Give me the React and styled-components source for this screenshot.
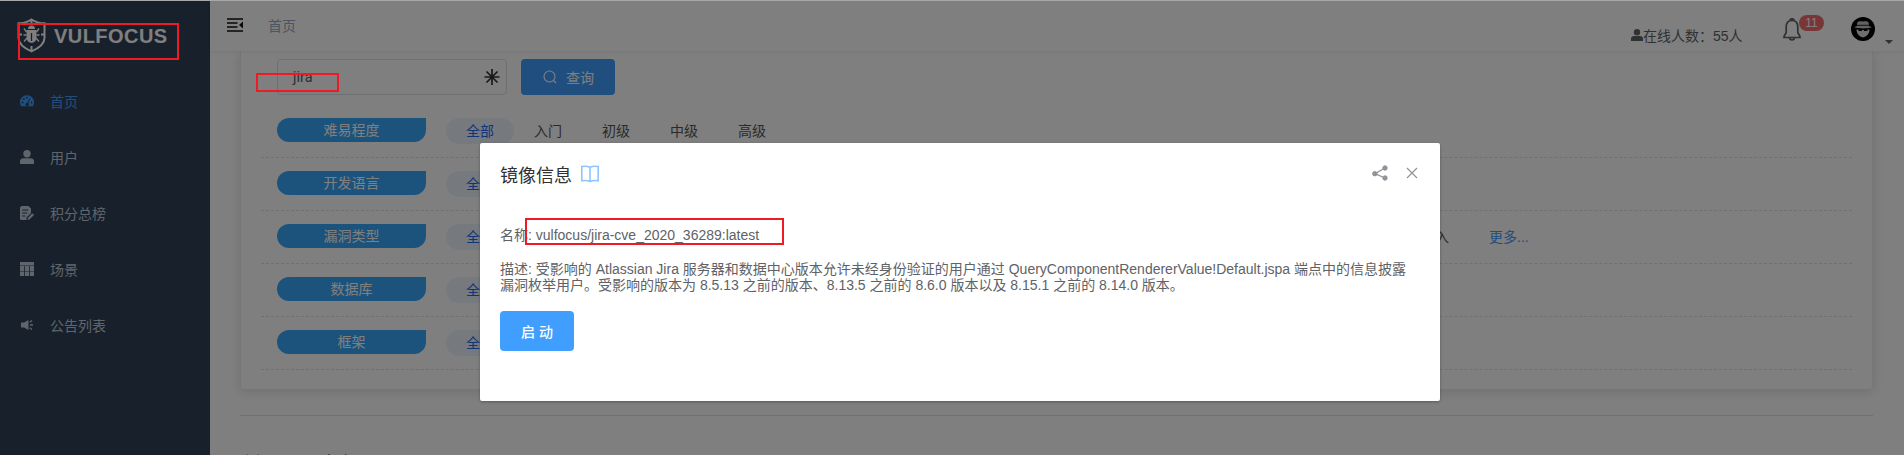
import React from "react";
import styled, { createGlobalStyle } from "styled-components";

const Global = createGlobalStyle`
  * { box-sizing: border-box; }
  html, body { margin: 0; height: 100%; overflow: hidden; }
  body {
    font-family: "Liberation Sans", "Noto Sans CJK SC", sans-serif;
    font-size: 14px;
    color: #606266;
    background: #fff;
  }
`;

const Page = styled.div`
  display: flex;
  height: 455px;
  border-top: 1px solid #a8a8a8;
  position: relative;
  overflow: hidden;
`;

const Sidebar = styled.aside`
  width: 210px;
  flex: none;
  background: #304156;
`;

const Brand = styled.div`
  display: flex;
  align-items: center;
  height: 72px;
  padding: 0 0 4px 17px;
  gap: 8px;
  color: #fff;
  font-size: 20px;
  font-weight: 700;
  letter-spacing: 0.45px;
  span { padding-top: 2px; }
`;

const MenuItem = styled.a`
  display: flex;
  align-items: center;
  gap: 16px;
  height: 56px;
  padding-left: 20px;
  color: ${(p) => (p.$active ? "#409eff" : "#bfcbd9")};
  svg { display: block; width: 14px; height: 14px; }
`;

const Main = styled.main`
  flex: 1;
  min-width: 0;
`;

const Navbar = styled.header`
  position: relative;
  z-index: 1;
  display: flex;
  height: 50px;
  padding-left: 17px;
  background: #fff;
  box-shadow: 0 1px 4px rgba(0, 21, 41, 0.08);
  > svg { margin-top: 17px; }
`;

const Crumb = styled.span`
  margin-left: 25px;
  line-height: 50px;
  color: #97a8be;
`;

const Online = styled.div`
  display: flex;
  align-items: center;
  height: 20px;
  margin: 24px 0 0 auto;
  width: 115px;
  white-space: nowrap;
`;

const Bell = styled.div`
  display: flex;
  width: 42px;
  margin: 14px 0 0 37px;
  svg { margin: 3px -2px 0 0; flex: none; }
`;

const Badge = styled.sup`
  height: 16px;
  width: 25px;
  flex: none;
  border-radius: 8px;
  background: #f56c6c;
  color: #fff;
  font-size: 12px;
  line-height: 17px;
  text-align: center;
`;

const Account = styled.div`
  display: flex;
  align-items: flex-end;
  gap: 10px;
  height: 27px;
  width: 53px;
  margin: 16px 0 0 26px;
  svg:first-child { align-self: flex-start; }
`;

const Caret = styled.i`
  border: 4px solid transparent;
  border-top: 4px solid #606266;
  border-bottom: 0;
`;

const Content = styled.div`
  padding: 0 31px 0 30px;
`;

const Card = styled.section`
  height: 339px;
  padding: 8px 20px 0;
  border: 1px solid #ebeef5;
  border-top: 0;
  border-radius: 0 0 4px 4px;
  box-shadow: 0 2px 12px rgba(0, 0, 0, 0.13);
`;

const SearchBar = styled.div`
  display: flex;
  gap: 14px;
  padding-left: 16px;
  height: 46px;
`;

const Field = styled.div`
  display: flex;
  align-items: center;
  justify-content: space-between;
  width: 230px;
  height: 36px;
  padding: 0 6px 0 15px;
  border: 1px solid #dcdfe6;
  border-radius: 4px;
  font-family: Roboto, sans-serif;
  font-size: 14.5px;
`;

const SearchButton = styled.button`
  display: flex;
  align-items: center;
  gap: 9px;
  width: 94px;
  height: 36px;
  padding: 0 0 0 22px;
  border: 0;
  border-radius: 4px;
  background: #409eff;
  color: #fff;
  font: inherit;
`;

const FilterRow = styled.div`
  display: flex;
  height: 53px;
  padding: 13px 0 0 16px;
  border-bottom: 1px dashed #dfe1e6;
`;

const FilterName = styled.div`
  width: 149px;
  height: 24px;
  margin-right: 20px;
  flex: none;
  border-radius: 14px 0 14px 14px;
  background: #38a6f8;
  color: #fff;
  line-height: 24px;
  text-align: center;
`;

const Option = styled.span`
  height: 26px;
  padding: 0 20px;
  border-radius: 13px;
  line-height: 26px;
  background: ${(p) => (p.$active ? "#ecf5ff" : "transparent")};
  color: ${(p) => (p.$active ? "#1a6af0" : p.$link ? "#409eff" : "#555")};
`;

const LastOptions = styled.div`
  display: flex;
  margin-left: 901px;
`;

const Divider = styled.hr`
  height: 1px;
  margin: 25px 0 35px;
  border: 0;
  background: #dcdfe6;
`;

const Tabs = styled.div`
  display: flex;
  gap: 40px;
  line-height: 20px;
  color: #303133;
  b { font-weight: 400; color: #409eff; }
`;

const Overlay = styled.div`
  position: absolute;
  z-index: 2;
  inset: -1px 0 0;
  display: flex;
  align-items: flex-start;
  justify-content: center;
  padding-top: 143px;
  padding-left: 16px;
  background: rgba(0, 0, 0, 0.5);
`;

const Dialog = styled.section`
  width: 960px;
  height: 258px;
  border-radius: 2px;
  background: #fff;
  box-shadow: 0 1px 3px rgba(0, 0, 0, 0.3);
  padding: 18px 20px 0;
`;

const DialogHead = styled.header`
  display: flex;
  align-items: center;
  height: 26px;
  color: #303133;
  font-size: 18px;
  svg { display: block; flex: none; }
`;

const BookIcon = styled.svg`
  margin-left: 9px;
`;

const HeadTools = styled.div`
  display: flex;
  align-items: center;
  gap: 18px;
  margin: -3px 2px 0 auto;
`;

const Line = styled.p`
  margin: ${(p) => (p.$first ? "40px" : "18px")} 0 0;
  line-height: 16px;
  white-space: pre-line;
`;

const StartButton = styled.button`
  display: block;
  width: 74px;
  height: 40px;
  margin-top: 18px;
  border: 0;
  border-radius: 4px;
  background: #409eff;
  color: #fff;
  font: inherit;
  font-weight: 500;
`;

const Mark = styled.div`
  position: absolute;
  z-index: 3;
  left: ${(p) => p.$x}px;
  top: ${(p) => p.$y - 1}px;
  width: ${(p) => p.$w}px;
  height: ${(p) => p.$h}px;
  border: 2px solid #ed1c24;
`;

const Shield = () => (
  <svg width="29" height="35" viewBox="0 0 29 35" fill="none" stroke="#fff">
    <path d="M14.5 1.5 C10 4.5 6 5.3 1.5 5.3 V20 C1.5 26 8 30.5 14.5 33.3 C21 30.5 27.5 26 27.5 20 V5.3 C23 5.3 19 4.5 14.5 1.5Z" strokeWidth="2" />
    <path d="M14.5 2v4M14.5 28v5M2 16.5h3M24 16.5h3" strokeWidth="2" />
    <path d="M11 11a3.5 3.5 0 0 1 7 0z" fill="#fff" stroke="none" />
    <path d="M9.5 12h10v7.5c0 7-10 7-10 0z" fill="#fff" stroke="none" />
    <path d="M9.5 14 7 10.500M19.5 14 22 10.500M9.5 17H6.5M19.5 17h3M10 20l-3 3.500M19 20l3 3.500" strokeWidth="1.3" />
    <path d="M14.5 15v8" stroke="#304156" strokeWidth="1.3" />
  </svg>
);

const DashIcon = () => (
  <svg viewBox="0 0 14 14" fill="currentColor">
    <path d="M7 1.3a7 7 0 0 0-7 7c0 1.5.4 2.8 1.1 4h11.800A7.500 7.500 0 0 0 14 8.300a7 7 0 0 0-7-7z" />
    <g fill="#304156">
      <circle cx="2.5" cy="8.5" r=".9" />
      <circle cx="3.9" cy="5" r=".9" />
      <circle cx="7" cy="3.6" r=".9" />
      <circle cx="11.5" cy="8.5" r=".9" />
      <path d="M9.400 4.500l.9.400L8.200 9a1.700 1.700 0 1 1-.9-.3z" />
    </g>
  </svg>
);

const UserIcon = ({ size = 14 }) => (
  <svg width={size} height={size} viewBox="0 0 14 14" fill="currentColor">
    <circle cx="7" cy="3.7" r="3.7" />
    <path d="M0 14v-2.500C0 9.500 1.500 8.300 3.500 8.300h7c2 0 3.500 1.200 3.500 3.200V14z" />
  </svg>
);

const NoteIcon = () => (
  <svg viewBox="0 0 14 14" fill="currentColor">
    <path d="M1.500 0h7L11 2.500V7l-4.500 4.500V14h-5A1.500 1.500 0 0 1 0 12.500v-11z" />
    <path d="M12.200 7.300 14 9l-4.500 4.500-2 .5.400-2.100z" />
    <path d="M2.200 4h6M2.200 7h5M2.200 10h3" stroke="#304156" />
  </svg>
);

const TableIcon = () => (
  <svg viewBox="0 0 14 14" fill="currentColor">
    <path d="M0 0h14v14H0z" />
    <path d="M0 3.500h14M0 9.500h14" stroke="#304156" strokeWidth=".5" />
    <path d="M4.500 4v10M9.500 4v10" stroke="#304156" strokeWidth=".8" />
  </svg>
);

const HornIcon = () => (
  <svg viewBox="0 0 14 14" fill="currentColor">
    <path d="M1 4.500h3L8.500 2v10L4 9.500H1z" />
    <path d="M9.800 4.300 12 2.500M10 7h3M9.800 9.700 12 11.500" stroke="currentColor" strokeWidth="1.3" />
  </svg>
);

const MENU = [
  ["首页", DashIcon],
  ["用户", UserIcon],
  ["积分总榜", NoteIcon],
  ["场景", TableIcon],
  ["公告列表", HornIcon],
];

const FILTERS = [
  { name: "难易程度", options: ["入门", "初级", "中级", "高级"] },
  { name: "开发语言" },
  { name: "漏洞类型", last: "入" },
  { name: "数据库" },
  { name: "框架" },
];

export default function App() {
  return (
    <Page>
      <Global />
      <Sidebar>
        <Brand><Shield /><span>VULFOCUS</span></Brand>
        {MENU.map(([label, Icon], i) => (
          <MenuItem key={label} $active={i === 0}><Icon />{label}</MenuItem>
        ))}
      </Sidebar>
      <Main>
        <Navbar>
          <svg width="16" height="14" viewBox="0 0 16 14">
            <path d="M0 1h16M0 5h10.500M0 9h10.500M0 13h16" stroke="#111" strokeWidth="1.7" />
            <path d="M16 3.500v7L12 7z" fill="#111" />
          </svg>
          <Crumb>首页</Crumb>
          <Online><UserIcon size={12} />在线人数：55人</Online>
          <Bell>
            <svg width="18" height="23" viewBox="0 0 18 23" fill="none" stroke="#606266" strokeWidth="1.7">
              <path d="M9 2.500c-4 0-5.800 3-5.800 6.500v5.500L1 18.500v1h16v-1l-2.200-4V9c0-3.500-1.800-6.500-5.800-6.500z" />
              <path d="M7 2.300a2 1.500 0 0 1 4 0M6.500 20c.5 2.500 4.500 2.500 5 0" />
            </svg>
            <Badge>11</Badge>
          </Bell>
          <Account>
            <svg width="24" height="24" viewBox="0 0 24 24">
              <circle cx="12" cy="12" r="12" fill="#000" />
              <path d="M6 9c0-5 1.500-5 6-4.500C16.500 4 18 4 18 9l3 1.200c-5 1.600-13 1.600-18 0z" fill="#c4c4c4" />
              <path d="M6 8.300h12" stroke="#222" />
              <path d="M5.500 12.500 11 13h2l5.500-.5c0 4-2.500 7-6.500 8-4-1-6.500-4-6.500-8z" fill="#ddd" />
              <path d="M7 12.500h4v1.500H8zM13 12.500h4l-1 1.500h-3z" />
            </svg>
            <Caret />
          </Account>
        </Navbar>
        <Content>
          <Card>
            <SearchBar>
              <Field>
                jira
                <svg width="16" height="18" viewBox="0 0 16 18" stroke="#333" strokeWidth="1.7">
                  <path d="M8 1v16M0.500 9h15M2.500 3.500l11 11M13.500 3.500l-11 11" />
                </svg>
              </Field>
              <SearchButton>
                <svg width="14" height="14" viewBox="0 0 14 14" fill="none" stroke="#fff" strokeWidth="1.1">
                  <circle cx="6.5" cy="6.5" r="5.5" />
                  <path d="m10.500 10.500 2.500 2.500" />
                </svg>
                查询
              </SearchButton>
            </SearchBar>
            {FILTERS.map((f) => (
              <FilterRow key={f.name}>
                <FilterName>{f.name}</FilterName>
                <Option $active>全部</Option>
                {f.options?.map((o) => <Option key={o}>{o}</Option>)}
                {f.last && (
                  <LastOptions><Option>{f.last}</Option><Option $link>更多...</Option></LastOptions>
                )}
              </FilterRow>
            ))}
          </Card>
          <Divider />
          <Tabs><b>全部</b><span>已启动</span></Tabs>
        </Content>
      </Main>
      <Overlay>
        <Dialog>
          <DialogHead>
            镜像信息
            <BookIcon width="18" height="18" viewBox="0 0 18 18" fill="none" stroke="#8cc5ff" strokeWidth="1.6">
              <path d="M9 2.300C6.500 1 3.500 1 .8 1.500v14.300c2.700-.5 5.700-.5 8.200.7 2.500-1.200 5.500-1.200 8.200-.7V1.500C14.500 1 11.500 1 9 2.300zV16.500" />
            </BookIcon>
            <HeadTools>
              <svg width="16" height="16" viewBox="0 0 16 16" fill="#909399" stroke="#909399">
                <path d="M13 3 3 8.700 13 13" fill="none" strokeWidth="1.3" />
                <circle cx="13" cy="3" r="2.2" />
                <circle cx="2.8" cy="8.7" r="2.2" />
                <circle cx="13" cy="13" r="2.2" />
              </svg>
              <svg width="12" height="12" viewBox="0 0 12 12" stroke="#909399" strokeWidth="1.2">
                <path d="m1 1 10 10M11 1 1 11" />
              </svg>
            </HeadTools>
          </DialogHead>
          <Line $first>名称: vulfocus/jira-cve_2020_36289:latest</Line>
          <Line>
            {"描述: 受影响的 Atlassian Jira 服务器和数据中心版本允许未经身份验证的用户通过 QueryComponentRendererValue!Default.jspa 端点中的信息披露\n漏洞枚举用户。受影响的版本为 8.5.13 之前的版本、8.13.5 之前的 8.6.0 版本以及 8.15.1 之前的 8.14.0 版本。"}
          </Line>
          <StartButton>启 动</StartButton>
        </Dialog>
      </Overlay>
      <Mark $x={18} $y={23} $w={161} $h={37} />
      <Mark $x={256} $y={73} $w={83} $h={19} />
      <Mark $x={525} $y={218} $w={259} $h={27} />
    </Page>
  );
}
